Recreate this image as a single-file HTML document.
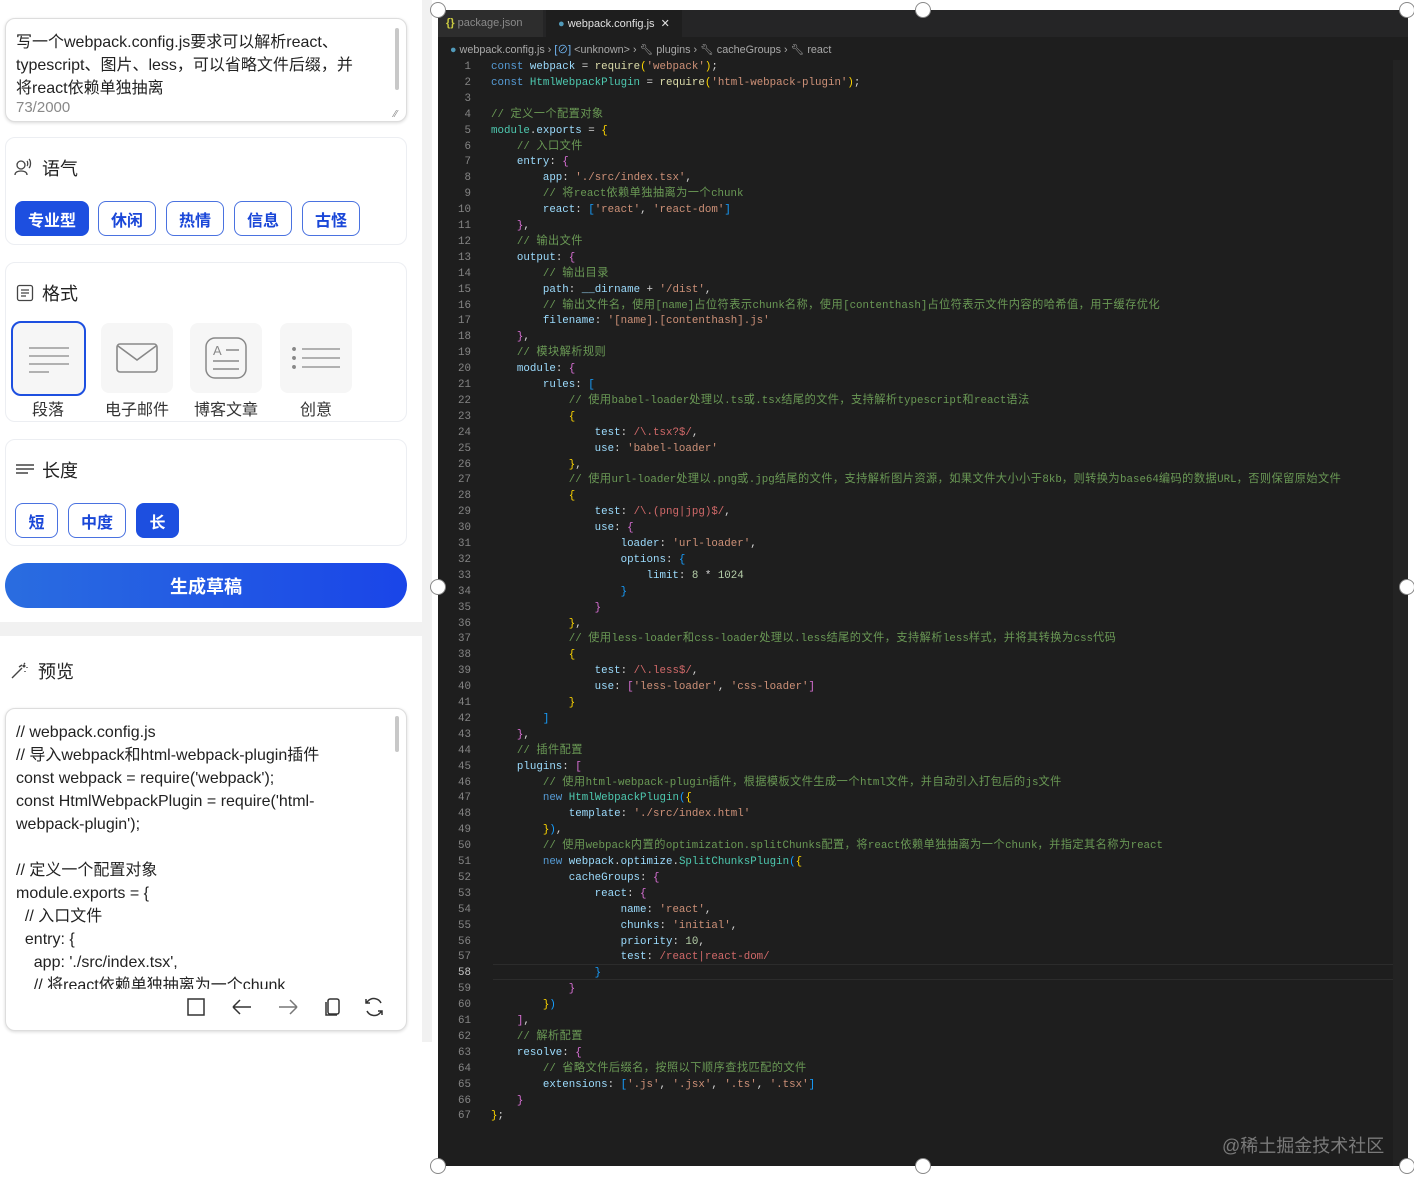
<!DOCTYPE html>
<html><head><meta charset="utf-8">
<style>
*{margin:0;padding:0;box-sizing:border-box}
body{width:1414px;height:1188px;background:#fff;position:relative;overflow:hidden;font-family:"Liberation Sans","Noto Sans CJK SC",sans-serif;color:#222}
.abs{position:absolute}
.card{position:absolute;left:5px;width:402px;background:#fff;border:1px solid #eceef2;border-radius:10px}
.hdr{position:absolute;left:14px;font-size:18px;color:#222;display:flex;align-items:center;gap:8px}
.btn{position:absolute;height:35px;border:1.5px solid #4a72e0;border-radius:8px;color:#1a47d8;font-weight:bold;font-size:16px;display:flex;align-items:center;justify-content:center}
.btn.on{background:#1d4fe0;border-color:#1d4fe0;color:#fff}
.tile{position:absolute;width:72px;height:70px;background:#f6f6f6;border-radius:8px;display:flex;align-items:center;justify-content:center}
.tl{position:absolute;font-size:16px;color:#333;width:90px;text-align:center}
.ptxt{font-size:16px;line-height:23px;color:#222;white-space:pre}
#ed{position:absolute;left:438px;top:10px;width:970px;height:1156px;background:#1e1e1e;overflow:hidden}
.code{position:absolute;left:0;top:50px;font-family:"Liberation Mono","Noto Sans CJK SC",monospace;font-size:10.8px;line-height:15.9px;color:#d4d4d4;white-space:pre}
.ln{position:absolute;left:0;width:33px;text-align:right;color:#858585}
.cl{position:absolute;left:53px}
.k{color:#569cd6}.v{color:#9cdcfe}.f{color:#dcdcaa}.s{color:#ce9178}.c{color:#6a9955}.t{color:#4ec9b0}.y{color:#ffd700}.m{color:#da70d6}.b{color:#179fff}.r{color:#d16969}.n{color:#b5cea8}
i{font-style:normal;font-size:11.2px;letter-spacing:0.45px}
.h{position:absolute;width:16px;height:16px;border-radius:50%;background:#fff;border:1.5px solid #888;transform:translate(-8px,-8px)}
</style></head><body>

<div class="abs" style="left:422px;top:0;width:10px;height:1042px;background:#f1f1f1"></div>
<div class="abs" style="left:0;top:622px;width:422px;height:14px;background:#f1f1f1"></div>

<div class="card" style="top:18px;height:104px;border-color:#ddd;box-shadow:0 1px 3px rgba(0,0,0,.15)">
 <div class="abs" style="left:10px;top:12px;font-size:16px;line-height:23px;color:#222;width:350px">写一个webpack.config.js要求可以解析react、typescript、图片、less，可以省略文件后缀，并将react依赖单独抽离</div>
 <div class="abs" style="left:10px;top:80px;font-size:15px;color:#888">73/2000</div>
 <div class="abs" style="left:389px;top:9px;width:4px;height:62px;background:#c8c8c8;border-radius:2px"></div>
 <div class="abs" style="left:388px;top:90px;font-size:10px;color:#888">⁄⁄</div>
</div>

<div class="card" style="top:137px;height:108px">
 <div class="hdr" style="top:17px;left:8px"><svg width="20" height="20" viewBox="0 0 20 20" fill="none" stroke="#444" stroke-width="1.3"><circle cx="7" cy="7" r="4"/><path d="M1 17c0-3 3-4 6-4s6 1 6 4"/><path d="M13 3c1 1 1 4 0 5M15 1c2 2 2 7 0 9"/></svg>语气</div>
 <div class="btn on" style="left:9px;top:63px;width:74px">专业型</div>
 <div class="btn" style="left:92px;top:63px;width:58px">休闲</div>
 <div class="btn" style="left:160px;top:63px;width:58px">热情</div>
 <div class="btn" style="left:228px;top:63px;width:58px">信息</div>
 <div class="btn" style="left:296px;top:63px;width:58px">古怪</div>
</div>

<div class="card" style="top:262px;height:160px">
 <div class="hdr" style="top:17px;left:10px"><svg width="18" height="18" viewBox="0 0 18 18" fill="none" stroke="#444" stroke-width="1.3"><rect x="1.5" y="1.5" width="15" height="15" rx="2"/><path d="M5 6h8M5 9h8M5 12h5"/></svg>格式</div>
 <div class="tile" style="left:5px;top:58px;width:75px;height:75px;border:2.5px solid #1d4fe0;border-radius:10px"><svg width="44" height="30" viewBox="0 0 44 30" stroke="#888" stroke-width="1.3"><path d="M2 4h40M2 12h40M2 20h40M2 28h20"/></svg></div>
 <div class="tile" style="left:95px;top:60px"><svg width="44" height="32" viewBox="0 0 44 32" fill="none" stroke="#888" stroke-width="1.6"><rect x="2" y="2" width="40" height="28" rx="3"/><path d="M3 4l19 14 19-14"/></svg></div>
 <div class="tile" style="left:184px;top:60px"><svg width="44" height="44" viewBox="0 0 44 44" fill="none" stroke="#888" stroke-width="1.5"><rect x="2" y="2" width="40" height="40" rx="9"/><text x="9" y="19" font-size="13" fill="#888" stroke="none" font-family="Liberation Sans">A</text><path d="M22 14h13M9 25h26M9 33h26"/></svg></div>
 <div class="tile" style="left:274px;top:60px"><svg width="48" height="24" viewBox="0 0 48 24" stroke="#888" stroke-width="1.3"><path d="M10 3h38M10 12h38M10 21h38"/><circle cx="2" cy="3" r="1.3" fill="#888"/><circle cx="2" cy="12" r="1.3" fill="#888"/><circle cx="2" cy="21" r="1.3" fill="#888"/></svg></div>
 <div class="tl" style="left:-3px;top:133px">段落</div>
 <div class="tl" style="left:86px;top:133px">电子邮件</div>
 <div class="tl" style="left:175px;top:133px">博客文章</div>
 <div class="tl" style="left:265px;top:133px">创意</div>
</div>

<div class="card" style="top:439px;height:107px">
 <div class="hdr" style="top:17px;left:10px"><svg width="18" height="14" viewBox="0 0 18 14" stroke="#444" stroke-width="1.4"><path d="M0 2h18M0 6h18M0 10h12"/></svg>长度</div>
 <div class="btn" style="left:9px;top:63px;width:43px">短</div>
 <div class="btn" style="left:62px;top:63px;width:58px">中度</div>
 <div class="btn on" style="left:130px;top:63px;width:43px">长</div>
</div>

<div class="abs" style="left:5px;top:563px;width:402px;height:45px;border-radius:23px;background:linear-gradient(90deg,#2a6de0,#1a45e8);color:#fff;font-weight:bold;font-size:18px;display:flex;align-items:center;justify-content:center">生成草稿</div>

<div class="abs" style="left:3px;top:636px;width:419px;height:406px;background:#fff"></div>
<div class="hdr" style="top:658px;left:10px"><svg width="20" height="18" viewBox="0 0 20 18" fill="none" stroke="#444" stroke-width="1.4"><path d="M2 16L12 6M9 5l3-2M14 1l1 1M17 5v1M15 9v1"/><circle cx="14" cy="4" r="0.8" fill="#444"/></svg>预览</div>
<div class="card" style="top:708px;height:323px;border-color:#ddd;box-shadow:0 1px 3px rgba(0,0,0,.15);overflow:hidden">
 <div class="abs" style="left:10px;top:12px;height:268px;overflow:hidden"><div class="ptxt">// webpack.config.js
// 导入webpack和html-webpack-plugin插件
const webpack = require('webpack');
const HtmlWebpackPlugin = require('html-
webpack-plugin');

// 定义一个配置对象
module.exports = {
  // 入口文件
  entry: {
    app: './src/index.tsx',
    // 将react依赖单独抽离为一个chunk</div></div>
 <div class="abs" style="left:389px;top:7px;width:4px;height:36px;background:#c8c8c8;border-radius:2px"></div>
 <svg class="abs" style="left:175px;top:286px" width="210" height="24" viewBox="0 0 210 24" fill="none" stroke="#333" stroke-width="1.5">
  <rect x="7" y="4" width="16" height="16"/>
  <path d="M52 12h18M52 12l7-7M52 12l7 7"/>
  <path d="M98 12h18M116 12l-7-7M116 12l-7 7" stroke="#777"/>
  <rect x="147" y="4" width="11" height="15" rx="2"/><path d="M145 7v13h11"/>
  <path d="M200 8a8 8 0 0 0-13-2l-2 2M186 16a8 8 0 0 0 13 2l2-2M185 4v4h4M201 20v-4h-4"/>
 </svg>
</div>

<div id="ed">
 <div class="abs" style="left:0;top:0;width:970px;height:27px;background:#252526"></div>
 <div class="abs" style="left:0;top:0;width:105px;height:27px;background:#2d2d2d;font-size:11px;color:#8a8a8a;padding:7px 0 0 8px"><span style="color:#cbcb41;font-weight:bold">{}</span> package.json</div>
 <div class="abs" style="left:108px;top:0;width:136px;height:27px;background:#1e1e1e;font-size:11px;color:#e0e0e0;padding:7px 0 0 12px"><span style="color:#519aba">●</span> webpack.config.js &nbsp;✕</div>
 <div class="abs" style="left:12px;top:31px;font-size:10.8px;color:#a9a9a9;white-space:pre"><span style="color:#519aba">●</span> webpack.config.js › <span style="color:#75beff">[⊘]</span> &lt;unknown&gt; › 🔧︎ plugins › 🔧︎ cacheGroups › 🔧︎ react</div>
 <div class="abs" style="left:55px;top:954px;width:900px;height:16px;border-top:1px solid #2c2c2c;border-bottom:1px solid #2c2c2c"></div>
 <div class="abs" style="left:955px;top:50px;width:15px;height:1106px;background:#232323"></div>
 <div class="abs" style="left:784px;top:1122px;font-size:18px;color:#7a7a7a">@稀土掘金技术社区</div>
 <div class="code" id="code">
<div class="ln" style="top:0">1</div><div class="cl" style="top:0"><span class="k">const</span> <span class="v">webpack</span> = <span class="f">require</span><span class="y">(</span><span class="s">'webpack'</span><span class="y">)</span>;</div>
<div class="ln" style="top:15.9px">2</div><div class="cl" style="top:15.9px"><span class="k">const</span> <span class="t">HtmlWebpackPlugin</span> = <span class="f">require</span><span class="y">(</span><span class="s">'html-webpack-plugin'</span><span class="y">)</span>;</div>
<div class="ln" style="top:31.8px">3</div>
<div class="ln" style="top:47.7px">4</div><div class="cl c" style="top:47.7px">// <i>定义一个配置对象</i></div>
<div class="ln" style="top:63.6px">5</div><div class="cl" style="top:63.6px"><span class="t">module</span>.<span class="v">exports</span> = <span class="y">{</span></div>
<div class="ln" style="top:79.5px">6</div><div class="cl c" style="top:79.5px">    // <i>入口文件</i></div>
<div class="ln" style="top:95.4px">7</div><div class="cl" style="top:95.4px">    <span class="v">entry</span>: <span class="m">{</span></div>
<div class="ln" style="top:111.3px">8</div><div class="cl" style="top:111.3px">        <span class="v">app</span>: <span class="s">'./src/index.tsx'</span>,</div>
<div class="ln" style="top:127.2px">9</div><div class="cl c" style="top:127.2px">        // <i>将</i>react<i>依赖单独抽离为一个</i>chunk</div>
<div class="ln" style="top:143.1px">10</div><div class="cl" style="top:143.1px">        <span class="v">react</span>: <span class="b">[</span><span class="s">'react'</span>, <span class="s">'react-dom'</span><span class="b">]</span></div>
<div class="ln" style="top:159px">11</div><div class="cl" style="top:159px">    <span class="m">}</span>,</div>
<div class="ln" style="top:174.9px">12</div><div class="cl c" style="top:174.9px">    // <i>输出文件</i></div>
<div class="ln" style="top:190.8px">13</div><div class="cl" style="top:190.8px">    <span class="v">output</span>: <span class="m">{</span></div>
<div class="ln" style="top:206.7px">14</div><div class="cl c" style="top:206.7px">        // <i>输出目录</i></div>
<div class="ln" style="top:222.6px">15</div><div class="cl" style="top:222.6px">        <span class="v">path</span>: <span class="v">__dirname</span> + <span class="s">'/dist'</span>,</div>
<div class="ln" style="top:238.5px">16</div><div class="cl c" style="top:238.5px">        // <i>输出文件名，使用</i>[name]<i>占位符表示</i>chunk<i>名称，使用</i>[contenthash]<i>占位符表示文件内容的哈希值，用于缓存优化</i></div>
<div class="ln" style="top:254.4px">17</div><div class="cl" style="top:254.4px">        <span class="v">filename</span>: <span class="s">'[name].[contenthash].js'</span></div>
<div class="ln" style="top:270.3px">18</div><div class="cl" style="top:270.3px">    <span class="m">}</span>,</div>
<div class="ln" style="top:286.2px">19</div><div class="cl c" style="top:286.2px">    // <i>模块解析规则</i></div>
<div class="ln" style="top:302.1px">20</div><div class="cl" style="top:302.1px">    <span class="v">module</span>: <span class="m">{</span></div>
<div class="ln" style="top:318px">21</div><div class="cl" style="top:318px">        <span class="v">rules</span>: <span class="b">[</span></div>
<div class="ln" style="top:333.9px">22</div><div class="cl c" style="top:333.9px">            // <i>使用</i>babel-loader<i>处理以</i>.ts<i>或</i>.tsx<i>结尾的文件，支持解析</i>typescript<i>和</i>react<i>语法</i></div>
<div class="ln" style="top:349.8px">23</div><div class="cl" style="top:349.8px">            <span class="y">{</span></div>
<div class="ln" style="top:365.7px">24</div><div class="cl" style="top:365.7px">                <span class="v">test</span>: <span class="r">/\.tsx?$/</span>,</div>
<div class="ln" style="top:381.6px">25</div><div class="cl" style="top:381.6px">                <span class="v">use</span>: <span class="s">'babel-loader'</span></div>
<div class="ln" style="top:397.5px">26</div><div class="cl" style="top:397.5px">            <span class="y">}</span>,</div>
<div class="ln" style="top:413.4px">27</div><div class="cl c" style="top:413.4px">            // <i>使用</i>url-loader<i>处理以</i>.png<i>或</i>.jpg<i>结尾的文件，支持解析图片资源，如果文件大小小于</i>8kb<i>，则转换为</i>base64<i>编码的数据</i>URL<i>，否则保留原始文件</i></div>
<div class="ln" style="top:429.3px">28</div><div class="cl" style="top:429.3px">            <span class="y">{</span></div>
<div class="ln" style="top:445.2px">29</div><div class="cl" style="top:445.2px">                <span class="v">test</span>: <span class="r">/\.(png|jpg)$/</span>,</div>
<div class="ln" style="top:461.1px">30</div><div class="cl" style="top:461.1px">                <span class="v">use</span>: <span class="m">{</span></div>
<div class="ln" style="top:477px">31</div><div class="cl" style="top:477px">                    <span class="v">loader</span>: <span class="s">'url-loader'</span>,</div>
<div class="ln" style="top:492.9px">32</div><div class="cl" style="top:492.9px">                    <span class="v">options</span>: <span class="b">{</span></div>
<div class="ln" style="top:508.8px">33</div><div class="cl" style="top:508.8px">                        <span class="v">limit</span>: <span class="n">8</span> * <span class="n">1024</span></div>
<div class="ln" style="top:524.7px">34</div><div class="cl" style="top:524.7px">                    <span class="b">}</span></div>
<div class="ln" style="top:540.6px">35</div><div class="cl" style="top:540.6px">                <span class="m">}</span></div>
<div class="ln" style="top:556.5px">36</div><div class="cl" style="top:556.5px">            <span class="y">}</span>,</div>
<div class="ln" style="top:572.4px">37</div><div class="cl c" style="top:572.4px">            // <i>使用</i>less-loader<i>和</i>css-loader<i>处理以</i>.less<i>结尾的文件，支持解析</i>less<i>样式，并将其转换为</i>css<i>代码</i></div>
<div class="ln" style="top:588.3px">38</div><div class="cl" style="top:588.3px">            <span class="y">{</span></div>
<div class="ln" style="top:604.2px">39</div><div class="cl" style="top:604.2px">                <span class="v">test</span>: <span class="r">/\.less$/</span>,</div>
<div class="ln" style="top:620.1px">40</div><div class="cl" style="top:620.1px">                <span class="v">use</span>: <span class="m">[</span><span class="s">'less-loader'</span>, <span class="s">'css-loader'</span><span class="m">]</span></div>
<div class="ln" style="top:636px">41</div><div class="cl" style="top:636px">            <span class="y">}</span></div>
<div class="ln" style="top:651.9px">42</div><div class="cl" style="top:651.9px">        <span class="b">]</span></div>
<div class="ln" style="top:667.8px">43</div><div class="cl" style="top:667.8px">    <span class="m">}</span>,</div>
<div class="ln" style="top:683.7px">44</div><div class="cl c" style="top:683.7px">    // <i>插件配置</i></div>
<div class="ln" style="top:699.6px">45</div><div class="cl" style="top:699.6px">    <span class="v">plugins</span>: <span class="m">[</span></div>
<div class="ln" style="top:715.5px">46</div><div class="cl c" style="top:715.5px">        // <i>使用</i>html-webpack-plugin<i>插件，根据模板文件生成一个</i>html<i>文件，并自动引入打包后的</i>js<i>文件</i></div>
<div class="ln" style="top:731.4px">47</div><div class="cl" style="top:731.4px">        <span class="k">new</span> <span class="t">HtmlWebpackPlugin</span><span class="b">(</span><span class="y">{</span></div>
<div class="ln" style="top:747.3px">48</div><div class="cl" style="top:747.3px">            <span class="v">template</span>: <span class="s">'./src/index.html'</span></div>
<div class="ln" style="top:763.2px">49</div><div class="cl" style="top:763.2px">        <span class="y">}</span><span class="b">)</span>,</div>
<div class="ln" style="top:779.1px">50</div><div class="cl c" style="top:779.1px">        // <i>使用</i>webpack<i>内置的</i>optimization.splitChunks<i>配置，将</i>react<i>依赖单独抽离为一个</i>chunk<i>，并指定其名称为</i>react</div>
<div class="ln" style="top:795px">51</div><div class="cl" style="top:795px">        <span class="k">new</span> <span class="v">webpack</span>.<span class="v">optimize</span>.<span class="t">SplitChunksPlugin</span><span class="b">(</span><span class="y">{</span></div>
<div class="ln" style="top:810.9px">52</div><div class="cl" style="top:810.9px">            <span class="v">cacheGroups</span>: <span class="m">{</span></div>
<div class="ln" style="top:826.8px">53</div><div class="cl" style="top:826.8px">                <span class="v">react</span>: <span class="m">{</span></div>
<div class="ln" style="top:842.7px">54</div><div class="cl" style="top:842.7px">                    <span class="v">name</span>: <span class="s">'react'</span>,</div>
<div class="ln" style="top:858.6px">55</div><div class="cl" style="top:858.6px">                    <span class="v">chunks</span>: <span class="s">'initial'</span>,</div>
<div class="ln" style="top:874.5px">56</div><div class="cl" style="top:874.5px">                    <span class="v">priority</span>: <span class="n">10</span>,</div>
<div class="ln" style="top:890.4px">57</div><div class="cl" style="top:890.4px">                    <span class="v">test</span>: <span class="r">/react|react-dom/</span></div>
<div class="ln" style="top:906.3px;color:#c6c6c6">58</div><div class="cl" style="top:906.3px">                <span class="b">}</span></div>
<div class="ln" style="top:922.2px">59</div><div class="cl" style="top:922.2px">            <span class="m">}</span></div>
<div class="ln" style="top:938.1px">60</div><div class="cl" style="top:938.1px">        <span class="y">}</span><span class="b">)</span></div>
<div class="ln" style="top:954px">61</div><div class="cl" style="top:954px">    <span class="m">]</span>,</div>
<div class="ln" style="top:969.9px">62</div><div class="cl c" style="top:969.9px">    // <i>解析配置</i></div>
<div class="ln" style="top:985.8px">63</div><div class="cl" style="top:985.8px">    <span class="v">resolve</span>: <span class="m">{</span></div>
<div class="ln" style="top:1001.7px">64</div><div class="cl c" style="top:1001.7px">        // <i>省略文件后缀名，按照以下顺序查找匹配的文件</i></div>
<div class="ln" style="top:1017.6px">65</div><div class="cl" style="top:1017.6px">        <span class="v">extensions</span>: <span class="b">[</span><span class="s">'.js'</span>, <span class="s">'.jsx'</span>, <span class="s">'.ts'</span>, <span class="s">'.tsx'</span><span class="b">]</span></div>
<div class="ln" style="top:1033.5px">66</div><div class="cl" style="top:1033.5px">    <span class="m">}</span></div>
<div class="ln" style="top:1049.4px">67</div><div class="cl" style="top:1049.4px"><span class="y">}</span>;</div>
 </div>
</div>

<div class="h" style="left:438px;top:10px"></div>
<div class="h" style="left:923px;top:10px"></div>
<div class="h" style="left:1407px;top:10px"></div>
<div class="h" style="left:438px;top:587px"></div>
<div class="h" style="left:1407px;top:587px"></div>
<div class="h" style="left:438px;top:1166px"></div>
<div class="h" style="left:923px;top:1166px"></div>
<div class="h" style="left:1407px;top:1166px"></div>
</body></html>
